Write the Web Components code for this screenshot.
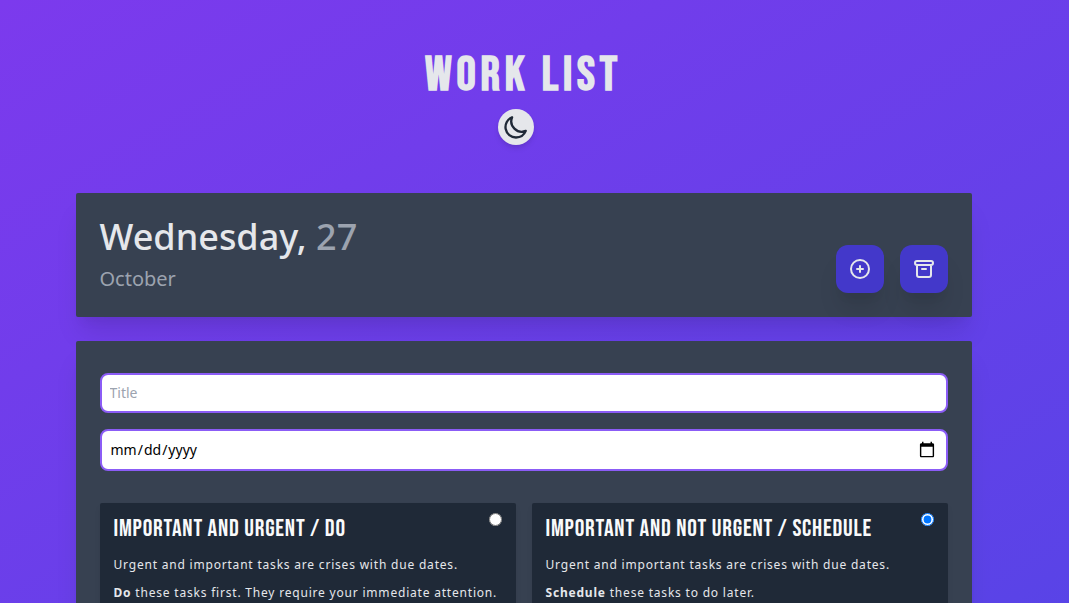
<!DOCTYPE html>
<html lang="en">
<head>
<meta charset="utf-8">
<title>Work List</title>
<style>
html, body { margin: 0; height: 100%; }
body { font-family: "Noto Sans", sans-serif; color: #e5e7eb; overflow: hidden; }
</style>
</head>
<body>
<work-app></work-app>
<script>
const define = (name, html, setup) => {
  const template = document.createElement('template');
  template.innerHTML = `<style>*, *::before, *::after { box-sizing: border-box; } h1, h2, h3, p { margin: 0; }</style>` + html;
  customElements.define(name, class extends HTMLElement {
    constructor() {
      super();
      this.attachShadow({ mode: 'open' }).append(template.content.cloneNode(true));
    }
    connectedCallback() { if (setup) setup(this, this.shadowRoot); }
  });
};

define('work-header', `
<style>
:host { display: flex; flex-direction: column; align-items: center; }
h1 { font: 700 48px/60px "Bebas Neue", "Liberation Sans Narrow", "Noto Sans", sans-serif; letter-spacing: 0.1em; text-transform: uppercase; }
button { display: grid; place-items: center; width: 36px; height: 36px; margin: 3px 16px 0 0; padding: 0; border: 0; border-radius: 50%; background: #e5e7eb; color: #1f2937; box-shadow: 0 4px 6px -1px #0000001a, 0 2px 4px -1px #0000000f; }
svg { width: 28px; height: 28px; }
</style>
<h1>Work List</h1>
<button type="button" aria-label="Dark mode">
<svg viewBox="0 0 24 24" fill="none" stroke="currentColor" stroke-width="2" stroke-linecap="round" stroke-linejoin="round"><path d="M20.354 15.354A9 9 0 018.646 3.646 9.003 9.003 0 0012 21a9.003 9.003 0 008.354-5.646z"/></svg>
</button>`);

define('icon-button', `
<style>
:host { display: block; }
button { display: grid; place-items: center; width: 48px; height: 48px; padding: 0; border: 0; border-radius: 12px; background: #4338ca; color: #e5e7eb; box-shadow: 0 20px 25px -5px #0000001a, 0 10px 10px -5px #0000000a; }
</style>
<button type="button"><slot></slot></button>`, (host, root) => root.querySelector('button').setAttribute('aria-label', host.getAttribute('label')));

define('work-panel', `
<style>
:host { display: block; padding: 24px; border-radius: 2px; background: #374151; box-shadow: 0 20px 25px -5px #0000001a, 0 10px 10px -5px #0000000a; }
</style>
<slot></slot>`);

define('date-bar', `
<style>
:host { display: flex; justify-content: space-between; align-items: flex-end; }
h2 { font-size: 36px; line-height: 40px; font-weight: 500; }
h2 span, p { color: #9ca3af; }
p { margin-top: 8px; font-size: 20px; line-height: 28px; }
nav { display: flex; gap: 16px; }
svg { width: 24px; height: 24px; fill: none; stroke: currentColor; stroke-width: 2; stroke-linecap: round; stroke-linejoin: round; }
</style>
<div><h2>Wednesday, <span>27</span></h2><p>October</p></div>
<nav>
<icon-button label="Add task"><svg viewBox="0 0 24 24"><path d="M12 9v3m0 0v3m0-3h3m-3 0H9m12 0a9 9 0 11-18 0 9 9 0 0118 0z"/></svg></icon-button>
<icon-button label="Archive"><svg viewBox="0 0 24 24"><path d="M5 8h14M5 8a2 2 0 110-4h14a2 2 0 110 4M5 8v10a2 2 0 002 2h10a2 2 0 002-2V8m-9 4h4"/></svg></icon-button>
</nav>`);

define('priority-card', `
<style>
:host { display: block; }
label { display: block; position: relative; min-height: 140px; padding: 12px 14px; border-radius: 2px; background: #1f2937; box-shadow: 0 4px 6px -1px #0000001a; letter-spacing: 0.05em; }
h3 { margin-bottom: 12px; font: 400 24px/28px "Bebas Neue", "Liberation Sans Narrow", "Noto Sans", sans-serif; color: #f9fafb; text-transform: uppercase; white-space: nowrap; letter-spacing: 0.05rem; }
input { position: absolute; top: 10px; right: 14px; width: 13px; height: 13px; margin: 0; }
</style>
<label><h3></h3><input type="radio" name="priority"><slot></slot></label>`, (host, root) => {
  root.querySelector('h3').textContent = host.getAttribute('heading');
  root.querySelector('input').checked = host.hasAttribute('checked');
});

define('task-form', `
<style>
:host { display: block; }
form { padding-top: 8px; }
.field { display: block; width: 100%; height: 40px; margin-bottom: 16px; padding: 7px 8px 9px; border: 2px solid #8b5cf6; border-radius: 8px; background: #fff; color: #000; font: 14px/20px "Noto Sans", sans-serif; }
.field::placeholder { color: #9ca3af; }
input[type=date] { height: 42px; padding: 8px; }
::-webkit-calendar-picker-indicator { width: 18px; height: 18px; }
.grid { display: grid; grid-template-columns: 1fr 1fr; gap: 16px; margin-top: 32px; }
priority-card p { margin-top: 8px; font-size: 12px; line-height: 20px; }
</style>
<form>
<input class="field" type="text" placeholder="Title" aria-label="Title">
<input class="field" type="date" aria-label="Due date">
<div class="grid">
<priority-card heading="Important and urgent / do"><p>Urgent and important tasks are crises with due dates.</p><p><b>Do</b> these tasks first. They require your immediate attention.</p></priority-card>
<priority-card heading="Important and not urgent / schedule" checked><p>Urgent and important tasks are crises with due dates.</p><p><b>Schedule</b> these tasks to do later.</p></priority-card>
</div>
</form>`);

define('work-app', `
<style>
:host { display: block; height: 100vh; overflow: hidden; background: linear-gradient(150deg, #7c3aed, #4f46e5) 0 0 / 100% 950px; }
main { display: flex; flex-direction: column; gap: 24px; max-width: 896px; margin: 0 auto; }
.page { padding: 46px 22px 0 0; }
work-header { margin-bottom: 24px; }
</style>
<div class="page"><main>
<work-header></work-header>
<work-panel><date-bar></date-bar></work-panel>
<work-panel><task-form></task-form></work-panel>
</main></div>`);
</script>
</body>
</html>
